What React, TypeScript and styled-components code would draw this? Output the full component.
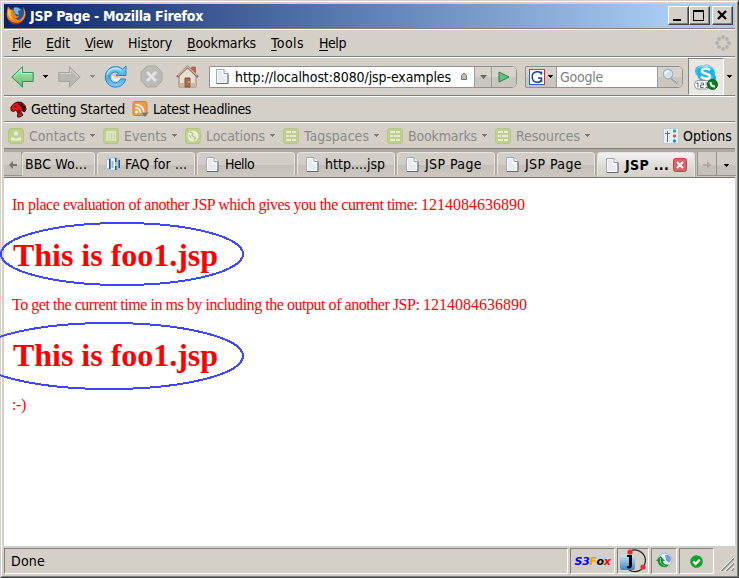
import React, { useLayoutEffect, useRef, useState } from "react";
import styled, { createGlobalStyle, css } from "styled-components";

const face = "#d4d0c8";
const shadow = "#808080";

const GlobalStyle = createGlobalStyle`
  * { box-sizing: border-box; }
  html, body { margin: 0; padding: 0; overflow: hidden; }
  body { background: ${face}; }
  svg { display: block; flex: none; }
`;

const Frame = styled.div`
  width: 739px;
  height: 578px;
  border: 1px solid;
  border-color: ${face} #404040 #404040 ${face};
  background: ${face};
`;
const Bevel = styled.div`
  width: 737px;
  height: 576px;
  padding: 2px;
  border: 1px solid;
  border-color: #fff ${shadow} ${shadow} #fff;
  display: flex;
  flex-direction: column;
  font-family: "DejaVu Sans Condensed", "DejaVu Sans", sans-serif;
  font-size: 14px;
  color: #000;
`;

const TextBox = styled.span<{ $w: number; $bold?: boolean; $color?: string }>`
  display: block;
  flex: none;
  width: ${(p) => p.$w}px;
  line-height: 18px;
  white-space: pre;
  font-weight: ${(p) => (p.$bold ? 700 : 400)};
  color: ${(p) => p.$color ?? "inherit"};
  u { text-underline-offset: 2px; text-decoration-thickness: 1px; text-decoration-skip-ink: none; }
`;

/* Tracks its letters so that the label fills the given width. */
function Label({ w, bold, color, children }: { w: number; bold?: boolean; color?: string; children: React.ReactNode }) {
  const ref = useRef<HTMLSpanElement>(null);
  const [spacing, setSpacing] = useState(0);
  useLayoutEffect(() => {
    const el = ref.current;
    if (!el) return;
    const natural = el.getBoundingClientRect().width;
    const count = (el.textContent ?? "").length;
    if (count) setSpacing((w - natural) / count);
  }, [w]);
  return (
    <TextBox $w={w} $bold={bold} $color={color}>
      <span ref={ref} style={{ letterSpacing: spacing }}>{children}</span>
    </TextBox>
  );
}

const Gap = styled.span<{ $w: number }>`
  flex: none;
  width: ${(p) => p.$w}px;
`;
const Rule = styled.div`
  height: 1px;
  flex: none;
  background: ${shadow};
`;

const TitleBar = styled.header`
  height: 24px;
  flex: none;
  display: flex;
  align-items: center;
  padding: 0 2px 1px;
  background: linear-gradient(90deg, #0a246a, #a6caf0 90%);
  color: #fff;
`;
const CaptionButtons = styled.div`
  margin-left: auto;
  display: flex;
`;
const CaptionButton = styled.button<{ $gap?: boolean }>`
  width: 21px;
  height: 19px;
  padding: 0;
  margin-left: ${(p) => (p.$gap ? 2 : 0)}px;
  border: 1px solid;
  border-color: #fff #404040 #404040 #fff;
  box-shadow: inset -1px -1px ${shadow};
  background: ${face};
`;

const Bar = styled.div<{ $h: number; $left?: number }>`
  height: ${(p) => p.$h}px;
  flex: none;
  display: flex;
  align-items: center;
  padding-left: ${(p) => p.$left ?? 0}px;
  border-top: 1px solid #fff;
  border-bottom: 1px solid ${shadow};
`;
const MenuBar = styled(Bar)`
  gap: 15px;
  padding-right: 4px;
  svg { margin-left: auto; }
`;

const field = css`
  height: 22px;
  display: flex;
  flex: none;
  align-items: center;
  border: 1px solid #8d9097;
  border-radius: 1px 5px 5px 1px;
  background: #fff;
  overflow: hidden;
`;
const UrlField = styled.div`
  ${field}
  width: 308px;
  padding-left: 6px;
`;
const SearchField = styled.div`
  ${field}
  width: 158px;
`;
const FieldButton = styled.button<{ $w: number; $side?: "left" | "right" }>`
  width: ${(p) => p.$w}px;
  height: 20px;
  flex: none;
  padding: 0;
  display: flex;
  align-items: center;
  justify-content: center;
  gap: 3px;
  border: 0 solid #9a9ca0;
  border-left-width: ${(p) => (p.$side === "left" ? 0 : 1)}px;
  border-right-width: ${(p) => (p.$side === "left" ? 1 : 0)}px;
  background: linear-gradient(#d7d3cb 50%, #cac6bf 50%);
`;
const SkypeButton = styled.button`
  width: 36px;
  height: 37px;
  flex: none;
  padding: 0;
  display: flex;
  align-items: center;
  justify-content: center;
  border: 1px solid;
  border-color: ${shadow} #fff #fff ${shadow};
  background: #e9e7e3;
`;

const TabStrip = styled.nav`
  height: 29px;
  flex: none;
  display: flex;
  padding-top: 3px;
  background: linear-gradient(#aeaaa3 0 3px, #c2beb7 4px, #cbc7c0);
  border-bottom: 1px solid #77746f;
`;
const Tab = styled.div<{ $w?: number; $active?: boolean; $pad?: number }>`
  width: ${(p) => p.$w ?? 98}px;
  height: ${(p) => (p.$active ? 25 : 23)}px;
  margin-right: 2px;
  flex: none;
  display: flex;
  align-items: center;
  padding-left: ${(p) => p.$pad ?? 8}px;
  border: 1px solid #e9e6e0;
  border-bottom: 0;
  border-radius: 4px 4px 0 0;
  box-shadow: 1px 0 #aaa69f, -1px 0 #b5b1aa;
  background: ${(p) =>
    p.$active
      ? "linear-gradient(#f4f3f0, #dedbd5 55%, #d4d0c8)"
      : "linear-gradient(#d2cec7 0 55%, #c3bfb8 55%, #cbc7c0)"};
`;
const StripButton = styled.button<{ $w: number; $left?: boolean }>`
  width: ${(p) => p.$w}px;
  height: 24px;
  flex: none;
  padding: 3px 0 0;
  display: flex;
  align-items: center;
  justify-content: center;
  border: 0 solid #96928b;
  border-width: ${(p) => (p.$left ? "0 1px 1px 0" : "0 0 1px 1px")};
  background: linear-gradient(#d2cec7 55%, #c5c1ba 55%);
`;

const Page = styled.main`
  position: relative;
  height: 368px;
  flex: none;
  padding: 18px 8px 0;
  background: #fff;
  color: #f00;
  font-family: "Liberation Serif", serif;
  font-size: 16px;
`;
const Paragraph = styled.p`
  margin: 0;
  height: 18px;
  display: flex;
`;
const Heading = styled.h1`
  margin: 22px 0 23px;
  padding: 1px 0 0 1px;
  height: 37px;
  font-size: 32px;
  span { line-height: 37px; }
`;
const Rings = styled.svg`
  position: absolute;
  left: -4px;
  top: 0;
`;

const StatusBar = styled.footer`
  height: 28px;
  flex: none;
  display: flex;
  gap: 2px;
  padding-top: 2px;
`;
const StatusPanel = styled.div<{ $w: number; $start?: boolean }>`
  width: ${(p) => p.$w}px;
  height: 26px;
  flex: none;
  display: flex;
  align-items: center;
  justify-content: ${(p) => (p.$start ? "flex-start" : "center")};
  padding-left: ${(p) => (p.$start ? 6 : 0)}px;
  border: 1px solid;
  border-color: ${shadow} #fff #fff ${shadow};
`;
const S3Mark = styled.b`
  display: flex;
  font: italic 700 11px "DejaVu Sans", sans-serif;
  letter-spacing: -0.4px;
  color: #00f;
`;
const Letter = styled.span<{ $c: string }>`
  color: ${(p) => p.$c};
`;
const Grip = styled.svg`
  margin: 9px 0 0 4px;
`;

const Arrow = ({ color = "#000" }: { color?: string }) => (
  <svg width="5" height="3" shapeRendering="crispEdges"><path d="M0 0h5v1H0zM1 1h3v1H1zM2 2h1v1H2z" fill={color} /></svg>
);
const Firefox = () => (
  <svg width="20" height="20" viewBox="0 0 20 20">
    <circle cx="10.5" cy="8.5" r="7.5" fill="#245a9c" />
    <path d="M8 2c3-1 5 0 7 2l-3 1 1 4-3-1-2-3z" fill="#74b8df" />
    <path d="M2 .5C.5 5 0 10 2.5 14c3.500 4.500 10 5 14 1s4-10 .500-14c1 4 1.500 8-.500 10.500-2 3-6 3-7.500.500 2 .500 3.500-.500 4-2-3 1-4.500-1-3.500-3-2 0-2.500-1-1.500-2.500L4.500 3.500z" fill="#ec7f1c" />
    <path d="M2.500 3c-1.500 5 0 9 5.500 11.500C4.500 11 4 8 5 5zM16.500 1.500c3.500 5 2 10-2.500 12.500 5-1.500 6.500-7.500 2.500-12.500" fill="#ffcb4c" />
    <path d="M2 13c4 4 10 6 15.500.500-3 6.500-12 7-15.500-.500" fill="#a92e17" />
  </svg>
);
const Doc = () => (
  <svg width="13" height="15" viewBox="0 0 13 15">
    <path d="M.5.5h7.500l4 4v10H.500z" fill="#f9fafb" stroke="#a3a9b1" />
    <path d="M1 14.500h11V5" fill="none" stroke="#5b6b84" />
    <path d="M8 .5v4h4" fill="#fff" stroke="#8f99a8" />
    <path d="M2 2h4v5h4v6H2z" fill="#e9ebee" />
  </svg>
);
const NavArrow = ({ back }: { back?: boolean }) => (
  <svg width="23" height="22" viewBox="0 0 23 22">
    <defs><linearGradient id="backFill" x2="0" y2="1"><stop stopColor="#b5edbf" /><stop offset=".5" stopColor="#84d695" /><stop offset="1" stopColor="#4dc576" /></linearGradient></defs>
    <path d={back ? "M.8 11 11.5.8v5.700h10.700v9H11.500v5.700z" : "M22.200 11 11.500.8v5.700H.8v9h10.700v5.700z"} fill={back ? "url(#backFill)" : "#b9b7b2"} stroke={back ? "#36915a" : "#a4a29e"} />
    <path d={back ? "M3 10.500 10.500 3.500v4h10.500" : "M2 7.500h10.500v-4L20 10.500"} fill="none" stroke="#fff" opacity={back ? ".55" : ".35"} />
  </svg>
);
const Reload = () => (
  <svg width="23" height="23" viewBox="0 0 23 23">
    <defs><linearGradient id="reloadFill" x2="0" y2="1"><stop stopColor="#8fd3f5" /><stop offset=".5" stopColor="#4aaae6" /><stop offset="1" stopColor="#7cd0f5" /></linearGradient></defs>
    <path d="M18.500 4.200A10.300 10.300 0 1 0 21.700 14h-5.200a5.400 5.400 0 1 1-2-6L12 10.500h10V1z" fill="url(#reloadFill)" stroke="#2c83c6" />
    <path d="M17 5.500A8.700 8.700 0 0 0 3 10" fill="none" stroke="#c5ebfc" strokeWidth="1.200" />
    <path d="M8.500 11c0 4 5 5 7 2" fill="none" stroke="#eaf8ff" strokeWidth="1.800" />
  </svg>
);
const Stop = () => (
  <svg width="23" height="23" viewBox="0 0 23 23">
    <path d="M7 1h9l6 6v9l-6 6H7l-6-6V7z" fill="#bcbab5" stroke="#aaa8a4" />
    <path d="m7 7 9 9m0-9-9 9" stroke="#e6e4e1" strokeWidth="3" />
  </svg>
);
const Home = () => (
  <svg width="23" height="23" viewBox="0 0 23 23">
    <path d="M15.500 2h4v8h-4z" fill="#c75a45" stroke="#8e574b" strokeWidth=".6" />
    <path d="M3 10 11.500 2 20 10v12H3z" fill="#e9ddd2" stroke="#a07e6a" />
    <path d="M4 18h4v4H4zm11 0h5v4h-5z" fill="#c9b7a3" />
    <path d="M9 13h5v9H9z" fill="#ab6a52" stroke="#81503f" />
    <path d="m1 12 10.500-10L22 12" fill="none" stroke="#8b6658" strokeWidth="2.400" />
    <path d="m2 10.500 9.500-9L21 10.500" fill="none" stroke="#cdb5a8" strokeWidth="1.200" />
    <path d="M12 17h2" stroke="#f4d28d" />
  </svg>
);
const Skype = () => (
  <svg width="24" height="26" viewBox="0 0 24 26">
    <circle cx="6.500" cy="7" r="5.500" fill="#38bce9" /><circle cx="17" cy="14" r="5" fill="#16a7e0" />
    <circle cx="12" cy="9.500" r="9" fill="#20b4e9" />
    <path d="M3 5C8-1 17 0 20 6c-4-4-12-4-17-1" fill="#9be1f6" />
    <path d="M16 6c-3-2-8-2-8 1 0 3.500 8 2 8 5.500 0 3-6 3-9 0" fill="none" stroke="#fff" strokeWidth="2.500" />
    <rect x=".5" y="16.500" width="16" height="8.500" rx="4" fill="#fff" stroke="#8c9297" />
    <path d="M4 18.500v5M2.500 19.500H4M6.500 19h3v2h-3v2.500h3M11.500 19h3v4.500h-3m0-2.500h3" fill="none" stroke="#626669" />
    <circle cx="18.500" cy="20.500" r="5" fill="#0b7f20" stroke="#075e18" />
    <path d="M16.500 18c0 3 1.500 4.500 4.500 4.500" fill="none" stroke="#fff" strokeWidth="2" />
  </svg>
);
const Search = () => (
  <svg width="17" height="17" viewBox="0 0 17 17">
    <path d="m9.500 10 6 5" stroke="#9b9da0" strokeWidth="2.600" /><path d="m10 9.500 5.500 4.500" stroke="#e5e6e6" />
    <circle cx="6" cy="6" r="4.800" fill="#cfe2ea" stroke="#9fb0b9" strokeWidth="1.200" />
    <path d="M3.500 6c0-2 1.500-3 3-3" fill="none" stroke="#fff" strokeWidth="1.500" />
  </svg>
);
const GMark = () => (
  <svg width="16" height="16" viewBox="0 0 16 16">
    <path d="M0 0h16v16H0z" fill="#fff" /><path d="M.5 0v16M0 15.500h15" stroke="#2c5fc9" /><path d="M0 .5h15" stroke="#189a3a" /><path d="M15.500 0v16" stroke="#ed1c24" />
    <path d="M12.500 5.500C11.500 1.500 3.200 1.500 3.200 8s8.300 6.500 9.300 2.500V9H9M12.500 2.500v3M12.500 9v4" fill="none" stroke="#1c409b" strokeWidth="1.500" />
  </svg>
);
const Throbber = () => (
  <svg width="16" height="16" viewBox="0 0 16 16">
    {[[8, 2], [12, 4], [14, 8], [12, 12], [8, 14], [4, 12], [2, 8], [4, 4]].map(([x, y]) => <circle key={`${x}-${y}`} cx={x} cy={y} r="1.9" fill="#b4b2ae" />)}
  </svg>
);
const RedHead = () => (
  <svg width="17" height="17" viewBox="0 0 17 17">
    <path d="M1 6 4 2.500 8 1l4 .500 3 3 1 4-1.500 2.500L12 9.500l-1.500 1L13 14l-3 2H7.500L8 12 6 9 3.500 10.500 1 9.500z" fill="#e81313" stroke="#2e0a0a" />
    <path d="m8 1 1.500 2L12 2l1 2.500 2.500 1-1 2 1.500 2-2 1-2-2-1-3-3-2z" fill="#2a0707" /><path d="M4.500 5h2v1.200h-2zM8 8l2 2-1 4z" fill="#500" />
  </svg>
);
const Feed = () => (
  <svg width="17" height="17" viewBox="0 0 17 17">
    <rect x="1" y=".5" width="14" height="14" rx="2" fill="#f0994c" stroke="#df7b2d" />
    <circle cx="4.500" cy="11" r="1.400" fill="#fff" /><path d="M3.500 7c3 0 5 2 5 5M3.500 3.500c5 0 8.500 3.500 8.500 8.500" fill="none" stroke="#fff" strokeWidth="1.500" />
    <path d="M9.500 11.500h7L13 16z" fill="#777" />
  </svg>
);
const GreenIcon = ({ kind }: { kind: string }) => (
  <svg width="16" height="16" viewBox="0 0 16 16">
    <rect x=".5" y=".5" width="15" height="15" rx="2.500" fill="#bfcf92" stroke="#b3c77d" />
    {kind === "person" && <><circle cx="8" cy="5.500" r="2.300" fill="#ebecd7" /><path d="M3 12.500V9.500h2.500L8 11l2.500-1.500H13v3z" fill="#ebecd7" /></>}
    {kind === "calendar" && <path d="M3 3h10v10H3zM4 5.500h8M4 8h8M4 10.500h8M6 5v8M8.500 5v8M11 5v8" fill="#e6e9cf" stroke="#c6d4a0" strokeWidth=".8" />}
    {kind === "globe" && <><circle cx="8" cy="8" r="5.500" fill="#ebecd7" /><path d="m5 4 3 1.500-1 2 3 2-1 2.500 2-2M4 7l2 3" fill="none" stroke="#b3c77d" strokeWidth="1.300" /></>}
    {kind === "list" && <path d="M3 4h5m1 0h4M3 8h3m1 0h6M3 12h5m1 0h4" stroke="#e8ead3" strokeWidth="1.800" />}
  </svg>
);
const OptionsIcon = () => (
  <svg width="16" height="16" viewBox="0 0 16 16">
    <path d="M.5.5h15v15H.500z" fill="#e6eef8" stroke="#b9cbdf" /><path d="M4.500 3v11M2 5.500h5" stroke="#5a7088" />
    <rect x="10" y="1.500" width="3" height="3" rx="1" fill="#36aa43" /><rect x="10" y="6.500" width="3" height="3" rx="1" fill="#df4444" /><rect x="10" y="11.500" width="3" height="3" rx="1" fill="#347ad0" />
  </svg>
);
const FaqIcon = () => (
  <svg width="16" height="16" viewBox="0 0 16 16">
    <path d="M3 2 8 .5l5 1L15.500 4 15 12l-4 3.500H6L1.500 13 .5 5z" fill="#b4c4d8" />
    <path d="M2 4h2v8H2zM6 2.500h4v11H6z" fill="#eef4fb" /><path d="M4 3h1.500v10H4zM10 2h1.500v4H10zm0 8h1.500v4H10zM13.500 4H15v8h-1.500z" fill="#315184" /><path d="M6.500 5h2v7h-2z" fill="#8ab4e2" />
  </svg>
);
const CloseTab = () => (
  <svg width="14" height="14" viewBox="0 0 14 14"><rect x=".5" y=".5" width="13" height="13" rx="2" fill="#dd5f67" stroke="#be4550" /><path d="m4 4 6 6m0-6-6 6" stroke="#fff" strokeWidth="2.200" /></svg>
);
const StripArrow = ({ right, dim }: { right?: boolean; dim?: boolean }) => (
  <svg width="8" height="8" viewBox="0 0 8 8"><path d={right ? "M8 4 4 0v3H0v2h4v3z" : "M0 4l4-4v3h4v2H4v3z"} fill={dim ? "#aaa8a3" : "#777570"} /></svg>
);
const JIcon = () => (
  <svg width="28" height="24" viewBox="0 0 28 24">
    <defs><linearGradient id="jFill" x2="0" y2="1"><stop stopColor="#c5e6f7" /><stop offset="1" stopColor="#3d87be" /></linearGradient></defs>
    <path d="M11 2c9-4 17 4 15 12-1 7-9 11-16 7" fill="none" stroke="#252525" strokeWidth="1.200" />
    <rect x="1" y="6" width="15" height="15" rx="2" fill="url(#jFill)" />
    <path d="M9 6h4v10c0 4-3 4-5 3v-2c2 1 2 0 2-2V8H8V6z" fill="#000" /><circle cx="11" cy="3" r="2.600" fill="#e62c31" /><circle cx="24" cy="18" r="2.600" fill="#e62c31" />
  </svg>
);
const Sync = () => (
  <svg width="17" height="18" viewBox="0 0 17 18">
    <circle cx="9" cy="8" r="7" fill="#e3ebf6" stroke="#a3b6d0" /><path d="M9 3c4-1 6 2 6 5l-2 3-3-3z" fill="#6d9cdc" />
    <path d="m4.500 4 4.500 5H7c0 3 3 4 6 3.500-3 4.500-11 3-11-3.500H0z" fill="#148c2f" /><path d="M4.500 6v4c1 2.500 2.500 3.500 4.500 3.500" fill="none" stroke="#7cdb7b" />
  </svg>
);
const Check = () => (
  <svg width="13" height="13" viewBox="0 0 12 12"><circle cx="6" cy="6" r="5.800" fill="#13a32c" /><path d="m3 6 2.200 2.200L9 4.400" fill="none" stroke="#fff" strokeWidth="2" /></svg>
);

const menus: [string, string, string, number][] = [
  ["", "F", "ile", 19], ["", "E", "dit", 24], ["", "V", "iew", 28], ["Hi", "s", "tory", 44],
  ["", "B", "ookmarks", 69], ["", "T", "ools", 33], ["", "H", "elp", 27],
];
const tools: [string, string, number][] = [
  ["Contacts", "person", 56], ["Events", "calendar", 43], ["Locations", "globe", 59],
  ["Tagspaces", "list", 65], ["Bookmarks", "list", 69], ["Resources", "list", 64],
];
const docTabs: [string, number][] = [["Hello", 29], ["http....jsp", 60], ["JSP Page", 57], ["JSP Page", 57]];

export default function App() {
  return (
    <>
      <GlobalStyle />
      <Frame>
        <Bevel>
          <TitleBar>
            <Firefox /><Gap $w={4} /><Label w={173} bold>JSP Page - Mozilla Firefox</Label>
            <CaptionButtons>
              <CaptionButton aria-label="Minimize"><svg width="19" height="17"><path d="M4 12h8v2H4z" /></svg></CaptionButton>
              <CaptionButton aria-label="Maximize"><svg width="19" height="17" shapeRendering="crispEdges"><path d="M3 3h11v11H3zM4 5v8h9V5z" fillRule="evenodd" /></svg></CaptionButton>
              <CaptionButton $gap aria-label="Close"><svg width="19" height="17"><path d="m5 4 8 8m0-8-8 8" stroke="#000" strokeWidth="2.2" /></svg></CaptionButton>
            </CaptionButtons>
          </TitleBar>
          <Rule />
          <MenuBar $h={28} $left={8}>
            {menus.map(([a, key, b, w]) => <Label key={key} w={w}>{a}<u>{key}</u>{b}</Label>)}
            <Throbber />
          </MenuBar>
          <Bar $h={39} $left={7}>
            <NavArrow back /><Gap $w={9} /><Arrow /><Gap $w={10} />
            <NavArrow /><Gap $w={9} /><Arrow color="#8b8985" /><Gap $w={9} />
            <Reload /><Gap $w={13} /><Stop /><Gap $w={13} /><Home /><Gap $w={10} />
            <UrlField>
              <Doc /><Gap $w={6} /><Label w={216}>http://localhost:8080/jsp-examples</Label><Gap $w={10} />
              <svg width="6" height="7" viewBox="0 0 6 7"><path d="M.5 2.500 2 .5h2l1.500 2v4h-5z" fill="#bbb" stroke="#777" /></svg><Gap $w={7} />
              <FieldButton $w={17} aria-label="History"><svg width="7" height="4"><path d="M0 0h7L3.500 4z" fill="#666" /></svg></FieldButton>
              <FieldButton $w={25} aria-label="Go"><svg width="12" height="12"><path d="M1 1v10l10-5z" fill="#63c67a" stroke="#278346" /></svg></FieldButton>
            </UrlField>
            <Gap $w={8} />
            <SearchField>
              <FieldButton $w={31} $side="left" aria-label="Search engine"><GMark /><Arrow /></FieldButton>
              <Gap $w={3} /><Label w={43} color="#808080">Google</Label><Gap $w={54} />
              <FieldButton $w={25} aria-label="Search"><Search /></FieldButton>
            </SearchField>
            <Gap $w={5} /><SkypeButton aria-label="Skype"><Skype /></SkypeButton><Gap $w={3} /><Arrow />
          </Bar>
          <Bar $h={26} $left={6}>
            <RedHead /><Gap $w={4} /><Label w={94}>Getting Started</Label><Gap $w={7} />
            <Feed /><Gap $w={4} /><Label w={98}>Latest Headlines</Label>
          </Bar>
          <Bar $h={27} $left={4}>
            {tools.map(([name, kind, w]) => (
              <React.Fragment key={name}>
                <GreenIcon kind={kind} /><Gap $w={5} /><Label w={w} color="#8b8a87">{name}</Label><Gap $w={5} /><Arrow color="#777" /><Gap $w={8} />
              </React.Fragment>
            ))}
            <Gap $w={65} /><OptionsIcon /><Gap $w={4} /><Label w={49}>Options</Label>
          </Bar>
          <TabStrip>
            <StripButton $w={18} $left aria-label="Scroll left"><StripArrow /></StripButton>
            <Tab $w={73} $pad={2}><Label w={62}>BBC Wo...</Label></Tab>
            <Tab $pad={7}><FaqIcon /><Gap $w={4} /><Label w={62}>FAQ for ...</Label></Tab>
            {docTabs.map(([name, w], i) => <Tab key={i}><Doc /><Gap $w={6} /><Label w={w}>{name}</Label></Tab>)}
            <Tab $active><Doc /><Gap $w={6} /><Label w={44} bold>JSP ...</Label><Gap $w={4} /><CloseTab /></Tab>
            <StripButton $w={19} aria-label="Scroll right"><StripArrow right dim /></StripButton>
            <StripButton $w={20} aria-label="All tabs"><Arrow /></StripButton>
          </TabStrip>
          <Page>
            <Paragraph>
              <Label w={409}>{"In place evaluation of another JSP which gives you the current time: "}</Label>
              <Label w={104}>1214084636890</Label>
            </Paragraph>
            <Heading><Label w={205} bold>This is foo1.jsp</Label></Heading>
            <Paragraph>
              <Label w={411}>{"To get the current time in ms by including the output of another JSP: "}</Label>
              <Label w={104}>1214084636890</Label>
            </Paragraph>
            <Heading><Label w={205} bold>This is foo1.jsp</Label></Heading>
            <Paragraph><Label w={14}>:-)</Label></Paragraph>
            <Rings width="250" height="220" viewBox="0 178 250 220">
              <g fill="none" stroke="#3c46ff" strokeWidth="2" shapeRendering="crispEdges">
                <ellipse cx="122" cy="254" rx="121" ry="31" /><ellipse cx="109" cy="356" rx="134" ry="33" />
              </g>
            </Rings>
          </Page>
          <StatusBar>
            <StatusPanel $w={564} $start><Label w={34}>Done</Label></StatusPanel>
            <StatusPanel $w={45}><S3Mark>S3<Letter $c="#ff9a00">F</Letter><Letter $c="#000">o</Letter><Letter $c="#f00">x</Letter></S3Mark></StatusPanel>
            <StatusPanel $w={32}><JIcon /></StatusPanel>
            <StatusPanel $w={26}><Sync /></StatusPanel>
            <StatusPanel $w={35}><Check /></StatusPanel>
            <Grip width="14" height="14" viewBox="0 0 14 14">
              <path d="M0 14 14 0M5 14l9-9M10 14l4-4" stroke="#fff" /><path d="M1.500 14 14 1.500M6.500 14l7.500-7.500M11.500 14l2.500-2.500" stroke="#858585" strokeWidth="1.400" />
            </Grip>
          </StatusBar>
        </Bevel>
      </Frame>
    </>
  );
}
